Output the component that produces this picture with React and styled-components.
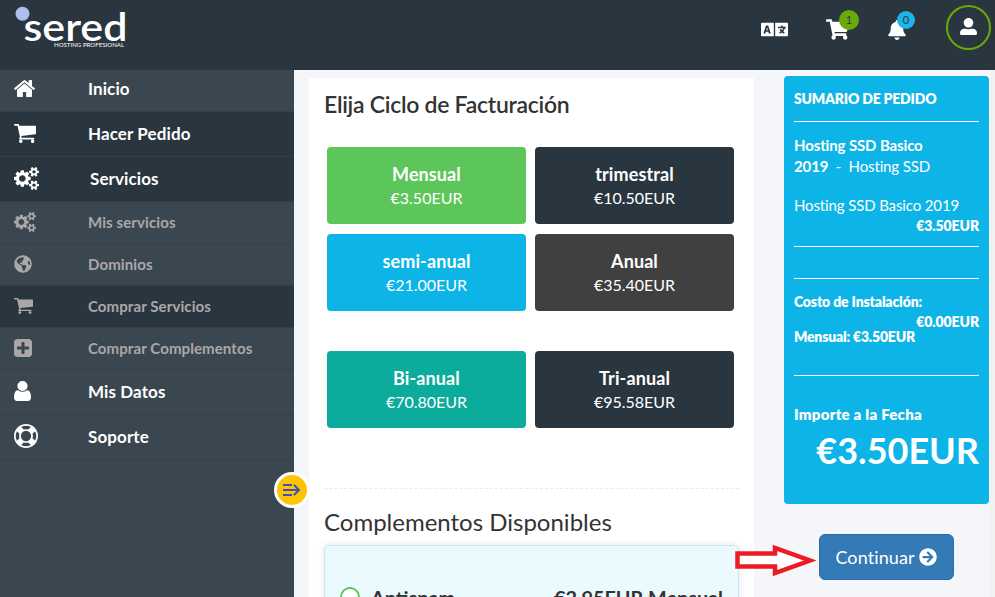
import React from "react";
import styled, { createGlobalStyle } from "styled-components";
import { FaShoppingCart, FaBell, FaUserAlt, FaLanguage, FaArrowCircleRight, FaGlobeAmericas } from "react-icons/fa";

const Global = createGlobalStyle`
  * { box-sizing: border-box; }
  html, body { margin: 0; height: 597px; overflow: hidden; }
  body { font-family: "Lato", "Liberation Sans", sans-serif; background: #f5f6f9; color: #333; }
`;

const Page = styled.div`
  width: 995px;
  height: 597px;
  overflow: hidden;
  display: flex;
  flex-direction: column;
`;

const Header = styled.header`
  height: 70px;
  flex: none;
  background: #2a363f;
  display: flex;
  justify-content: space-between;
  padding: 5px 4px 0 14px;
`;

const HeaderTools = styled.div`
  display: flex;
  height: 45px;
  align-items: center;
  color: #fff;
`;

const Tool = styled.div`
  position: relative;
  display: flex;
  margin-right: ${(p) => p.$gap}px;
  padding-top: ${(p) => p.$drop || 0}px;
`;

const Badge = styled.span`
  position: absolute;
  left: ${(p) => p.$left}px;
  top: ${(p) => p.$top}px;
  width: ${(p) => p.$size}px;
  height: ${(p) => p.$size}px;
  border-radius: 50%;
  background: ${(p) => p.$color};
  color: #2a363f;
  font-size: 11px;
  line-height: ${(p) => p.$size}px;
  text-align: center;
`;

const Avatar = styled.div`
  width: 45px;
  height: 45px;
  border: 2px solid #6aaa08;
  border-radius: 50%;
  display: flex;
  align-items: center;
  justify-content: center;
  padding-bottom: 2px;
`;

const Body = styled.div`
  flex: 1;
  display: flex;
  min-height: 0;
`;

const Sidebar = styled.nav`
  position: relative;
  width: 294px;
  flex: none;
  background: #3a4751;
`;

const Item = styled.a`
  display: flex;
  align-items: center;
  height: ${(p) => p.$h}px;
  padding: 0 0 ${(p) => p.$lift ?? 2}px 14px;
  border-bottom: 1px solid #33404a;
  background: ${(p) => (p.$active ? "#2a363f" : "transparent")};
  color: ${(p) => (p.$sub ? "#aba7a8" : "#fff")};
  font-size: ${(p) => (p.$sub ? 15 : 17)}px;
  font-weight: 700;
  letter-spacing: 0.1px;
`;

const IconCell = styled.span`
  width: ${(p) => p.$w || 74}px;
  display: flex;
`;

const Toggle = styled.button`
  position: absolute;
  left: 274px;
  top: 402px;
  width: 36px;
  height: 36px;
  padding: 0;
  border: 3px solid #fff;
  border-radius: 50%;
  background: #ffc400;
  display: flex;
  align-items: center;
  justify-content: center;
  z-index: 2;
`;

const Main = styled.main`
  width: 445px;
  margin: 8px 0 0 15px;
  padding: 12px 15px 0;
  flex: none;
  background: #fff;
`;

const Title = styled.h2`
  margin: 0;
  font-size: ${(p) => p.$size}px;
  line-height: 28px;
  font-weight: ${(p) => p.$w};
  letter-spacing: ${(p) => p.$ls || 0}px;
`;

const Cycles = styled.div`
  display: grid;
  grid-template-columns: 199px 199px;
  grid-auto-rows: 77px;
  gap: 10px 9px;
  padding-left: 3px;
  margin-top: ${(p) => p.$top}px;
`;

const Cycle = styled.div`
  border-radius: 4px;
  background: ${(p) => p.$color};
  color: #fff;
  text-align: center;
  padding-top: 15px;
  font-size: 16px;
  line-height: 24px;
`;

const CycleName = styled.div`
  font-size: 18px;
  font-weight: 700;
  letter-spacing: 0.1px;
`;

const Divider = styled.div`
  border-top: 1px dashed #dfeeee;
  margin: 60px 0 19px;
`;

const Addon = styled.div`
  height: 104px;
  margin-top: 9px;
  padding: 0 15px;
  border: 1px solid #c8e8ee;
  border-radius: 5px;
  box-shadow: 0 0 7px #0000001a;
  background: #eafaff;
  display: flex;
  align-items: center;
  font-size: 19.8px;
  font-weight: 700;
`;

const Radio = styled.span`
  width: 20px;
  height: 20px;
  border: 2px solid #5cc65a;
  border-radius: 50%;
  background: #fff;
  margin-right: 11px;
`;

const AddonPrice = styled.span`
  margin-left: auto;
`;

const Aside = styled.aside`
  width: 206px;
  margin-left: 30px;
  padding-top: 6px;
  display: flex;
  flex-direction: column;
  align-items: flex-start;
`;

const Summary = styled.section`
  width: 205px;
  height: 428px;
  border-radius: 4px;
  background: #0db4e7;
  color: #fff;
  padding: 0 10px;
  font-size: 15px;
`;

const Line = styled.div`
  padding-top: ${(p) => p.$top || 0}px;
  font-size: ${(p) => p.$size || 15}px;
  line-height: ${(p) => p.$lh || 21}px;
  font-weight: ${(p) => p.$w || 400};
  text-align: ${(p) => (p.$right ? "right" : "left")};
  letter-spacing: ${(p) => p.$ls || 0}px;
  white-space: nowrap;
`;

const Rule = styled.div`
  height: 1px;
  background: #fff;
  margin-top: ${(p) => p.$top}px;
`;

const Continue = styled.button`
  width: 135px;
  height: 46px;
  margin: 30px 0 0 35px;
  padding: 0 1px 0 0;
  border: 1px solid #2e6da4;
  border-radius: 6px;
  background: #337ab7;
  color: #fff;
  font: 400 18px "Lato", sans-serif;
  letter-spacing: 0.1px;
  display: flex;
  align-items: center;
  justify-content: center;
  gap: 4px;
`;

const Scrollbar = styled.div`
  margin-left: auto;
  width: 5px;
  background: #f1f1f1;
`;

const Pointer = styled.svg`
  position: absolute;
  left: 735px;
  top: 543px;
  z-index: 3;
`;

const PATHS = {
  home: ["90 250 1612 1290", "M1472 992v480q0 26-19 45t-45 19h-384v-384h-256v384h-384q-26 0-45-19t-19-45v-480q0-1 .5-3t.5-3l575-474 575 474q1 2 1 6zm223-69l-62 74q-8 9-21 11h-3q-13 0-21-7l-692-577-692 577q-12 8-24 7-13-2-21-11l-62-74q-8-10-7-23.5t11-21.5l719-599q32-26 76-26t76 26l244 204v-195q0-14 9-23t23-9h192q14 0 23 9t9 23v408l219 182q10 8 11 21.5t-7 23.5z"],
  cart: ["64 256 1664 1408", "M704 1536q0 52-38 90t-90 38-90-38-38-90 38-90 90-38 90 38 38 90zm896 0q0 52-38 90t-90 38-90-38-38-90 38-90 90-38 90 38 38 90zm128-1088v512q0 24-16.5 42.5t-40.5 21.5l-1044 122q13 60 13 70 0 16-24 64h920q26 0 45 19t19 45-19 45-45 19h-1024q-26 0-45-19t-19-45q0-11 8-31.5t16-36 21.5-40 15.5-29.5l-177-823h-204q-26 0-45-19t-19-45 19-45 45-19h256q16 0 28.5 6.5t19.5 15.5 13 24.5 8 26 5.5 29.5 4.5 26h1201q26 0 45 19t19 45z"],
  plus: ["128 128 1536 1536", "M1408 960v-128q0-26-19-45t-45-19h-320v-320q0-26-19-45t-45-19h-128q-26 0-45 19t-19 45v320h-320q-26 0-45 19t-19 45v128q0 26 19 45t45 19h320v320q0 26 19 45t45 19h128q26 0 45-19t19-45v-320h320q26 0 45-19t19-45zm256-544v960q0 119-84.5 203.5t-203.5 84.5h-960q-119 0-203.5-84.5t-84.5-203.5v-960q0-119 84.5-203.5t203.5-84.5h960q119 0 203.5 84.5t84.5 203.5z"],
  user: ["256 128 1280 1536", "M1536 1399q0 109-62.5 187t-150.5 78h-854q-88 0-150.5-78t-62.5-187q0-85 8.5-160.5t31.5-152 58.5-131 94-89 134.5-34.5q131 128 313 128t313-128q76 0 134.5 34.5t94 89 58.5 131 31.5 152 8.5 160.5zm-256-887q0 159-112.5 271.5t-271.5 112.5-271.5-112.5-112.5-271.5 112.5-271.5 271.5-112.5 271.5 112.5 112.5 271.5z"],
  ring: ["0 0 1792 1792", "M896 0q182 0 348 71t286 191 191 286 71 348-71 348-191 286-286 191-348 71-348-71-286-191-191-286-71-348 71-348 191-286 286-191 348-71zm0 128q-190 0-361 90l194 194q82-28 167-28t167 28l194-194q-171-90-361-90zm-678 1129l194-194q-28-82-28-167t28-167l-194-194q-90 171-90 361t90 361zm678 407q190 0 361-90l-194-194q-82 28-167 28t-167-28l-194 194q171 90 361 90zm0-384q159 0 271.5-112.5t112.5-271.5-112.5-271.5-271.5-112.5-271.5 112.5-112.5 271.5 112.5 271.5 271.5 112.5zm484-217l194 194q90-171 90-361t-90-361l-194 194q28 82 28 167t-28 167z"],
  cogs: ["0 16 1920 1760", "M896 896q0-106-75-181t-181-75-181 75-75 181 75 181 181 75 181-75 75-181zm768 512q0-52-38-90t-90-38-90 38-38 90q0 53 37.5 90.5t90.5 37.5 90.5-37.5 37.5-90.5zm0-1024q0-52-38-90t-90-38-90 38-38 90q0 53 37.5 90.5t90.5 37.5 90.5-37.5 37.5-90.5zm-384 421v185q0 10-7 19.5t-16 10.5l-155 24q-11 35-32 76 34 48 90 115 7 11 7 20 0 12-7 19-23 30-82.5 89.5t-78.5 59.5q-11 0-21-7l-115-90q-37 19-77 31-11 108-23 155-7 24-30 24h-186q-11 0-20-7.5t-10-17.5l-23-153q-34-10-75-31l-118 89q-7 7-20 7-11 0-21-8-144-133-144-160 0-9 7-19 10-14 41-53t47-61q-23-44-35-82l-152-24q-10-1-17-9.5t-7-19.5v-185q0-10 7-19.5t16-10.5l155-24q11-35 32-76-34-48-90-115-7-11-7-20 0-12 7-20 22-30 82-89t79-59q11 0 21 7l115 90q34-18 77-32 11-108 23-154 7-24 30-24h186q11 0 20 7.5t10 17.5l23 153q34 10 75 31l118-89q8-7 20-7 11 0 21 8 144 133 144 160 0 8-7 19-12 16-42 54t-45 60q23 48 34 82l152 23q10 2 17 10.5t7 19.5zm640 533v140q0 16-149 31-12 27-30 52 51 113 51 138 0 4-4 7-122 71-124 71-8 0-46-47t-52-68q-20 2-30 2t-30-2q-14 21-52 68t-46 47q-2 0-124-71-4-3-4-7 0-25 51-138-18-25-30-52-149-15-149-31v-140q0-16 149-31 13-29 30-52-51-113-51-138 0-4 4-7 4-2 35-20t59-34 30-16q8 0 46 46.5t52 67.5q20-2 30-2t30 2q51-71 92-112l6-2q4 0 124 70 4 3 4 7 0 25-51 138 17 23 30 52 149 15 149 31zm0-1024v140q0 16-149 31-12 27-30 52 51 113 51 138 0 4-4 7-122 71-124 71-8 0-46-47t-52-68q-20 2-30 2t-30-2q-14 21-52 68t-46 47q-2 0-124-71-4-3-4-7 0-25 51-138-18-25-30-52-149-15-149-31v-140q0-16 149-31 13-29 30-52-51-113-51-138 0-4 4-7 4-2 35-20t59-34 30-16q8 0 46 46.5t52 67.5q20-2 30-2t30 2q51-71 92-112l6-2q4 0 124 70 4 3 4 7 0 25-51 138 17 23 30 52 149 15 149 31z"],
};

function Glyph({ name, width, height }) {
  if (name === "globe") return <FaGlobeAmericas size={width} />;
  const [box, d] = PATHS[name];
  return (
    <svg width={width} height={height} viewBox={box} preserveAspectRatio="none">
      <path d={d} fill="currentColor" />
    </svg>
  );
}

const NAV = [
  { label: "Inicio", icon: "home", w: 21, ht: 17, h: 42, lift: 4 },
  { label: "Hacer Pedido", icon: "cart", w: 22, ht: 19, h: 45, active: true },
  { label: "Servicios", icon: "cogs", w: 25, ht: 23, h: 45, active: true, cell: 76 },
  { label: "Mis servicios", icon: "cogs", w: 22, ht: 20, h: 42, sub: true },
  { label: "Dominios", icon: "globe", w: 18, ht: 18, h: 42, sub: true },
  { label: "Comprar Servicios", icon: "cart", w: 19, ht: 16, h: 42, sub: true, active: true },
  { label: "Comprar Complementos", icon: "plus", w: 18, ht: 18, h: 42, sub: true },
  { label: "Mis Datos", icon: "user", w: 17, ht: 20, h: 45 },
  { label: "Soporte", icon: "ring", w: 24, ht: 24, h: 45 },
];

const TOP_CYCLES = [
  ["Mensual", "€3.50EUR", "#5cc65a"],
  ["trimestral", "€10.50EUR", "#2a363f"],
  ["semi-anual", "€21.00EUR", "#0db4e7"],
  ["Anual", "€35.40EUR", "#404040"],
];
const LONG_CYCLES = [
  ["Bi-anual", "€70.80EUR", "#0cac9c"],
  ["Tri-anual", "€95.58EUR", "#2a363f"],
];

function CycleGrid({ items, top }) {
  return (
    <Cycles $top={top}>
      {items.map(([name, price, color]) => (
        <Cycle key={name} $color={color}>
          <CycleName>{name}</CycleName>
          {price}
        </Cycle>
      ))}
    </Cycles>
  );
}

function Logo() {
  return (
    <svg width="116" height="46" viewBox="14 5 116 46">
      <circle cx="22.5" cy="13.7" r="7" fill="#b0bdf0" />
      <text x="23.5" y="40.5" textLength="104" lengthAdjust="spacingAndGlyphs" fontSize="38.5" fontWeight="600" fill="#fff">sered</text>
      <text x="54" y="47" textLength="70" fontSize="6" fill="#fff">HOSTING PROFESIONAL</text>
    </svg>
  );
}

export default function App() {
  return (
    <Page>
      <Global />
      <Header>
        <Logo />
        <HeaderTools>
          <Tool $gap={38} $drop={4}><FaLanguage size={27} /></Tool>
          <Tool $gap={38} $drop={4}>
            <FaShoppingCart size={23} />
            <Badge $left={13} $top={-4} $size={20} $color="#6aaa08">1</Badge>
          </Tool>
          <Tool $gap={39} $drop={5}>
            <FaBell size={20} />
            <Badge $left={10} $top={-4} $size={18} $color="#1bb5e8">0</Badge>
          </Tool>
          <Avatar><FaUserAlt size={17} /></Avatar>
        </HeaderTools>
      </Header>
      <Body>
        <Sidebar>
          {NAV.map((n) => (
            <Item key={n.label} $h={n.h} $lift={n.lift} $active={n.active} $sub={n.sub}>
              <IconCell $w={n.cell}><Glyph name={n.icon} width={n.w} height={n.ht} /></IconCell>
              {n.label}
            </Item>
          ))}
          <Toggle>
            <svg width="18" height="14" viewBox="0 0 18 14" fill="none" stroke="#3f51b5" strokeWidth="2">
              <path d="M0 2h9M0 7h16M0 12h9M11 2l5 5-5 5" />
            </svg>
          </Toggle>
        </Sidebar>
        <Main>
          <Title $w={600} $size={23} $ls={-0.28}>Elija Ciclo de Facturación</Title>
          <CycleGrid items={TOP_CYCLES} top={29} />
          <CycleGrid items={LONG_CYCLES} top={40} />
          <Divider />
          <Title $w={400} $size={24}>Complementos Disponibles</Title>
          <Addon>
            <Radio />
            Antispam
            <AddonPrice>€2.95EUR Mensual</AddonPrice>
          </Addon>
        </Main>
        <Aside>
          <Summary>
            <Line $w={800} $top={12} $size={14} $ls={-0.2}>SUMARIO DE PEDIDO</Line>
            <Rule $top={12} />
            <Line $top={13} $ls={-0.13}><b>Hosting SSD Basico<br />2019</b>&nbsp; - &nbsp;Hosting SSD</Line>
            <Line $top={18} $ls={-0.13}>Hosting SSD Basico 2019</Line>
            <Line $w={800} $right $size={14} $lh={19} $ls={-0.1}>€3.50EUR</Line>
            <Rule $top={11} />
            <Rule $top={31} />
            <Line $w={800} $top={13} $size={14} $lh={20} $ls={-0.15}>Costo de Instalación:</Line>
            <Line $w={800} $right $size={14} $lh={20} $ls={-0.1}>€0.00EUR</Line>
            <Line $w={800} $size={14} $lh={10} $ls={-0.2}>Mensual: €3.50EUR</Line>
            <Rule $top={33} />
            <Line $w={800} $top={28} $ls={0.25}>Importe a la Fecha</Line>
            <Line $w={700} $right $top={2} $size={36} $lh={46}>€3.50EUR</Line>
          </Summary>
          <Continue>Continuar <FaArrowCircleRight size={18} /></Continue>
        </Aside>
        <Scrollbar />
      </Body>
      <Pointer width="84" height="36" viewBox="0 0 84 36">
        <path d="M2.5 10.5H40V5L75 17.5 40 30V23.5H2.5z" fill="#fff" stroke="#ed1c24" strokeWidth="4.5" />
      </Pointer>
    </Page>
  );
}
